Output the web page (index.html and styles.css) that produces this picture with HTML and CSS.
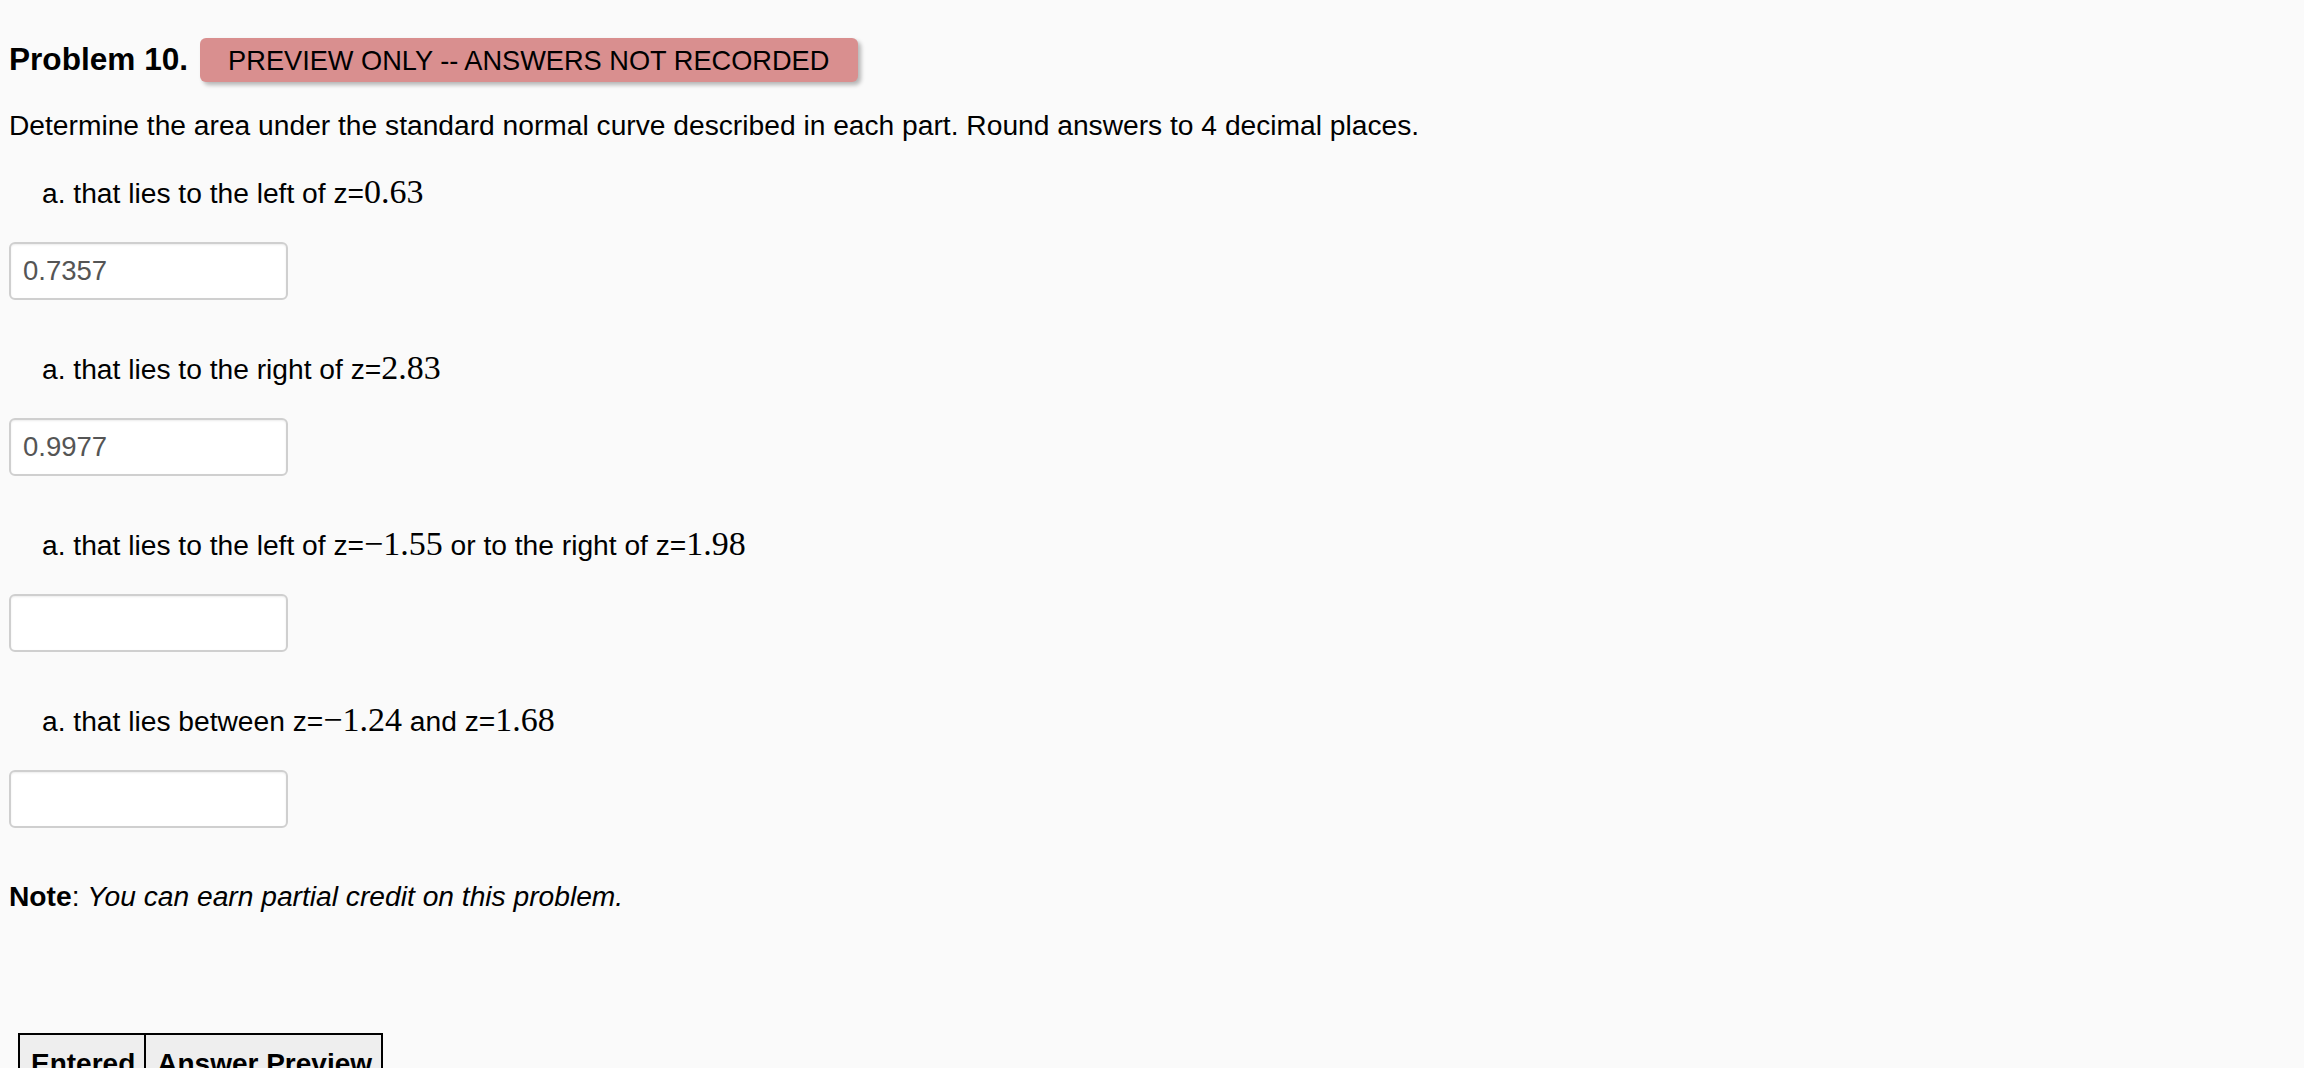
FILE: index.html
```html
<!DOCTYPE html>
<html>
<head>
<meta charset="utf-8">
<title>Problem 10</title>
<link rel="stylesheet" href="styles.css">
</head>
<body>
<div class="page">
  <div class="header">
    <span class="title">Problem 10.</span>
    <span class="badge">PREVIEW ONLY -- ANSWERS NOT RECORDED</span>
  </div>
  <p class="desc">Determine the area under the standard normal curve described in each part. Round answers to 4 decimal places.</p>

  <div class="part">
    <div class="item">a. that lies to the left of z=<span class="math">0.63</span></div>
    <input class="answer" type="text" value="0.7357">
  </div>
  <div class="part">
    <div class="item">a. that lies to the right of z=<span class="math">2.83</span></div>
    <input class="answer" type="text" value="0.9977">
  </div>
  <div class="part">
    <div class="item">a. that lies to the left of z=<span class="math">−1.55</span> or to the right of z=<span class="math">1.98</span></div>
    <input class="answer" type="text" value="">
  </div>
  <div class="part">
    <div class="item">a. that lies between z=<span class="math">−1.24</span> and z=<span class="math">1.68</span></div>
    <input class="answer" type="text" value="">
  </div>

  <p class="note"><b>Note</b>: <i>You can earn partial credit on this problem.</i></p>

  <table class="results">
    <tr><th>Entered</th><th>Answer Preview</th></tr>
  </table>
</div>
</body>
</html>
```

FILE: styles.css
```css
html, body {
  margin: 0;
  padding: 0;
  background: #fafafa;
}
body {
  font-family: "Liberation Sans", Arial, Helvetica, sans-serif;
  font-size: 28.2px;
  color: #000;
}
.page {
  padding: 38px 9px 0 9px;
  display: flex;
  flex-direction: column;
  align-items: flex-start;
}
.header {
  display: flex;
  align-items: center;
  gap: 12px;
  height: 44px;
}
.title {
  font-weight: bold;
  font-size: 31.6px;
  line-height: 1;
}
.badge {
  display: block;
  font-size: 27.2px;
  line-height: 32px;
  padding: 7px 29px 5px 28px;
  background: #d98f8f;
  border-radius: 6px;
  box-shadow: 3px 3px 4px rgba(0, 0, 0, 0.28);
  color: #000;
}
.desc {
  margin: 23.5px 0 0 0;
  line-height: 39.2px;
}
.part {
  display: flex;
  flex-direction: column;
  align-items: flex-start;
  margin-top: 28.5px;
}
.part + .part {
  margin-top: 49px;
}
.item {
  margin-left: 33px;
  line-height: 40px;
  height: 40px;
  white-space: nowrap;
}
.math {
  font-family: "Liberation Serif", "Times New Roman", serif;
  font-size: 34px;
  line-height: 1;
}
.answer {
  margin-top: 29px;
  box-sizing: border-box;
  width: 279px;
  height: 58px;
  border: 2px solid #cfcfcf;
  border-radius: 6px;
  background: #fff;
  box-shadow: inset 0 1px 2px rgba(0, 0, 0, 0.08);
  font-family: "Liberation Sans", Arial, sans-serif;
  font-size: 27.5px;
  color: #555;
  padding: 0 12px;
  outline: none;
}
.note {
  margin: 48px 0 0 0;
  line-height: 40px;
}
.results {
  margin: 117px 0 0 9px;
  border-collapse: collapse;
  border: 2px solid #000;
}
.results th {
  background: #eeeeee;
  border: 2px solid #000;
  font-weight: bold;
  font-size: 28px;
  line-height: 39.2px;
  padding: 9px 9px 9px 11px;
  text-align: left;
}
```
